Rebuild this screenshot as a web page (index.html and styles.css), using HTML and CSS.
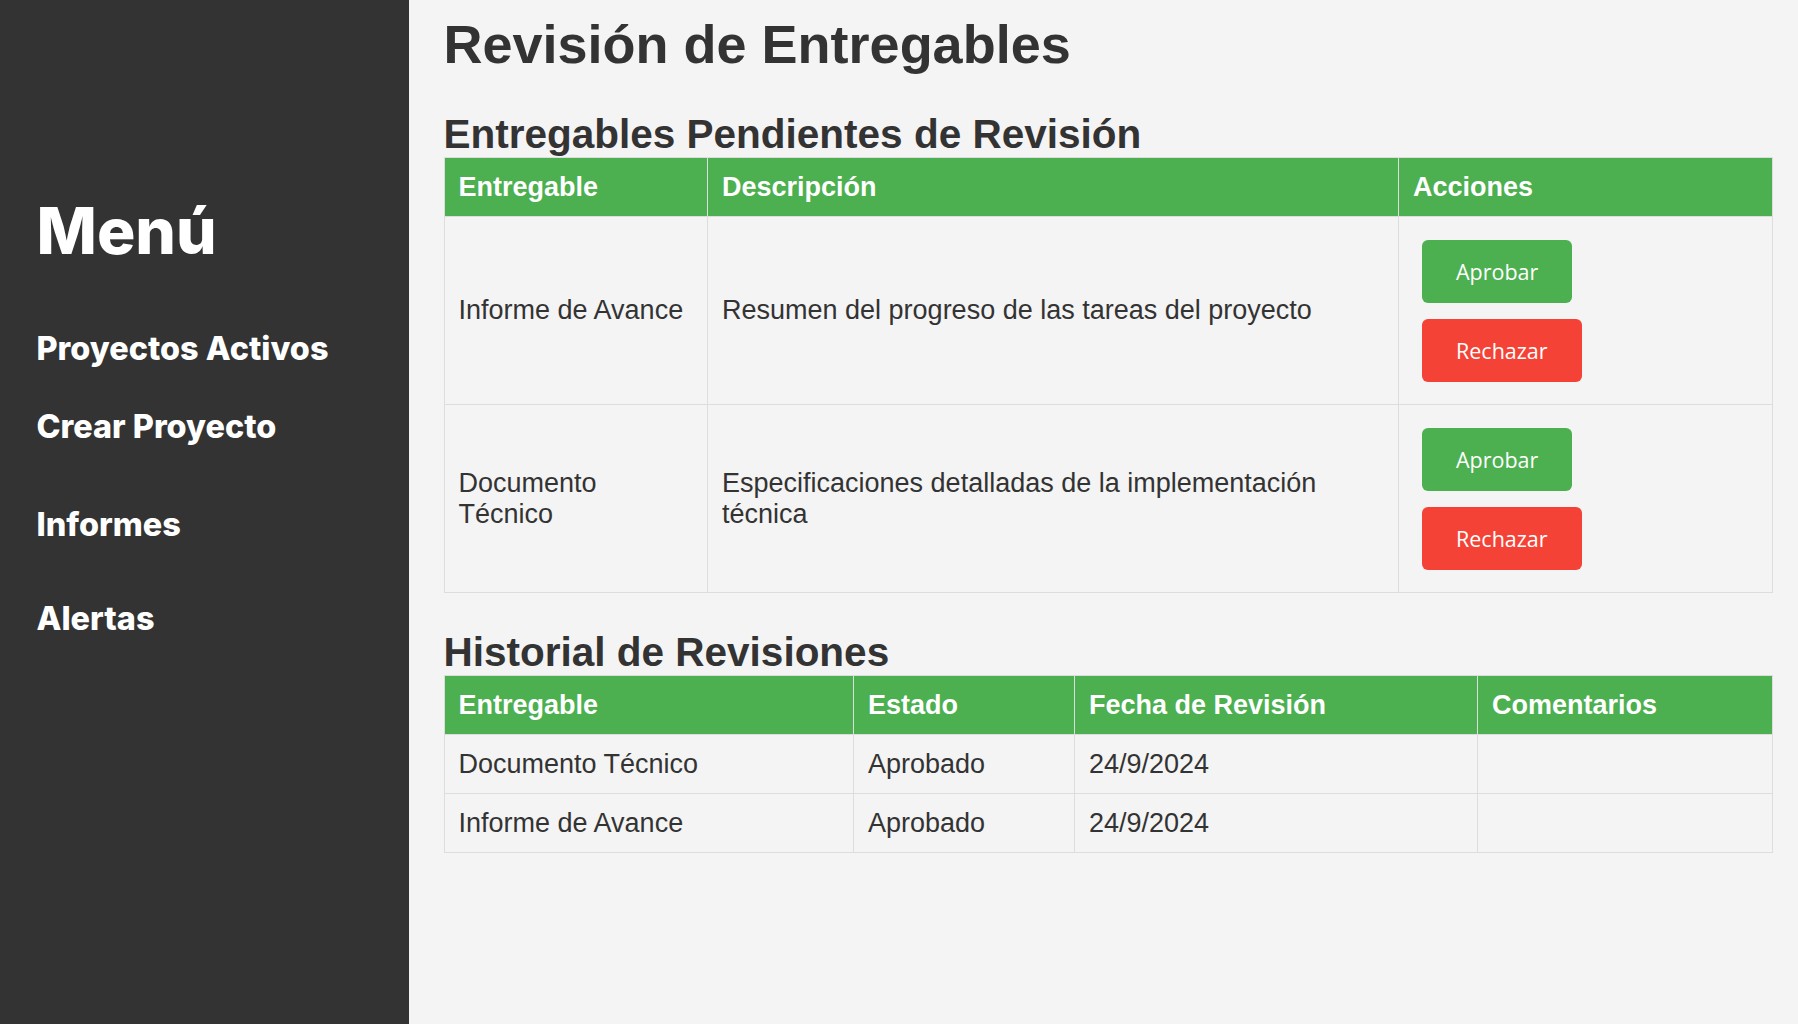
FILE: index.html
```html
<!DOCTYPE html>
<html lang="es">
<head>
<meta charset="utf-8">
<title>Revisión de Entregables</title>
<link rel="stylesheet" href="styles.css">
</head>
<body>
<div class="layout">
  <aside class="sidebar">
    <h2 class="menu-title">Menú</h2>
    <ul class="nav">
      <li class="nav-item nav-first"><a href="#">Proyectos Activos</a></li>
      <li class="nav-item nav-second"><a href="#">Crear Proyecto</a></li>
      <li class="nav-item nav-third"><a href="#">Informes</a></li>
      <li class="nav-item nav-fourth"><a href="#">Alertas</a></li>
    </ul>
  </aside>
  <main class="content">
    <h1 class="page-title">Revisión de Entregables</h1>
    <h2 class="section-title">Entregables Pendientes de Revisión</h2>
    <table class="data-table">
      <thead>
        <tr>
          <th class="p-col1">Entregable</th>
          <th class="p-col2">Descripción</th>
          <th>Acciones</th>
        </tr>
      </thead>
      <tbody>
        <tr>
          <td>Informe de Avance</td>
          <td>Resumen del progreso de las tareas del proyecto</td>
          <td class="actions-cell">
            <div class="actions">
              <button class="btn btn-approve">Aprobar</button>
              <button class="btn btn-reject">Rechazar</button>
            </div>
          </td>
        </tr>
        <tr>
          <td>Documento Técnico</td>
          <td>Especificaciones detalladas de la implementación técnica</td>
          <td class="actions-cell">
            <div class="actions">
              <button class="btn btn-approve">Aprobar</button>
              <button class="btn btn-reject">Rechazar</button>
            </div>
          </td>
        </tr>
      </tbody>
    </table>

    <h2 class="section-title history-title">Historial de Revisiones</h2>
    <table class="data-table">
      <thead>
        <tr>
          <th class="h-col1">Entregable</th>
          <th class="h-col2">Estado</th>
          <th class="h-col3">Fecha de Revisión</th>
          <th>Comentarios</th>
        </tr>
      </thead>
      <tbody>
        <tr>
          <td>Documento Técnico</td>
          <td>Aprobado</td>
          <td>24/9/2024</td>
          <td></td>
        </tr>
        <tr>
          <td>Informe de Avance</td>
          <td>Aprobado</td>
          <td>24/9/2024</td>
          <td></td>
        </tr>
      </tbody>
    </table>
  </main>
</div>
</body>
</html>
```

FILE: styles.css
```css
* {
  box-sizing: border-box;
}

html, body {
  margin: 0;
  padding: 0;
  height: 100%;
}

body {
  background: #f4f4f4;
  color: #333;
  font-family: "Liberation Sans", Arial, sans-serif;
}

.layout {
  display: flex;
  min-height: 1024px;
}

.sidebar {
  width: 409px;
  flex: 0 0 409px;
  background: #333;
  color: #fff;
  padding: 193px 20px 0 36.5px;
  font-family: Inter, "Noto Sans", sans-serif;
}

.menu-title {
  margin: 0;
  font-size: 64px;
  line-height: 76px;
  font-weight: 800;
}

.nav {
  list-style: none;
  margin: 0;
  padding: 0;
}

.nav-item {
  font-size: 32.4px;
  line-height: 36px;
  font-weight: 800;
}

.nav-item a {
  color: #fff;
  text-decoration: none;
}

.nav-first { margin-top: 62px; }
.nav-second { margin-top: 42px; }
.nav-third { margin-top: 62px; }
.nav-fourth { margin-top: 58px; }

.content {
  flex: 1;
  padding: 12px 25.5px 40px 34.5px;
}

.page-title {
  margin: 0;
  font-size: 54px;
  line-height: 64px;
  font-weight: 700;
  color: #333;
}

.section-title {
  margin: 36px 0 1px;
  font-size: 40.5px;
  line-height: 44px;
  font-weight: 700;
  color: #333;
}

.history-title {
  margin-top: 37px;
}

.data-table {
  width: 100%;
  border-collapse: collapse;
  table-layout: fixed;
  font-size: 27px;
  line-height: 31px;
}

.data-table th,
.data-table td {
  border: 1px solid #ddd;
  padding: 13.5px 14px;
  text-align: left;
  vertical-align: middle;
}

.data-table th {
  background: #4caf50;
  color: #fff;
  font-weight: 700;
}

.data-table td {
  color: #333;
}

.p-col1 { width: 263.5px; }
.p-col2 { width: 691px; }

.h-col1 { width: 409.5px; }
.h-col2 { width: 221px; }
.h-col3 { width: 403px; }

.actions {
  display: flex;
  flex-direction: column;
  align-items: flex-start;
  gap: 16px;
  padding: 9px;
}

.btn {
  display: flex;
  align-items: center;
  justify-content: center;
  height: 63px;
  padding: 0 34px;
  border: none;
  border-radius: 6px;
  color: #fff;
  font-family: "Open Sans", "Noto Sans", sans-serif;
  font-size: 21.5px;
  cursor: pointer;
}

.btn-approve {
  background: #4caf50;
}

.btn-reject {
  background: #f44336;
}
```
